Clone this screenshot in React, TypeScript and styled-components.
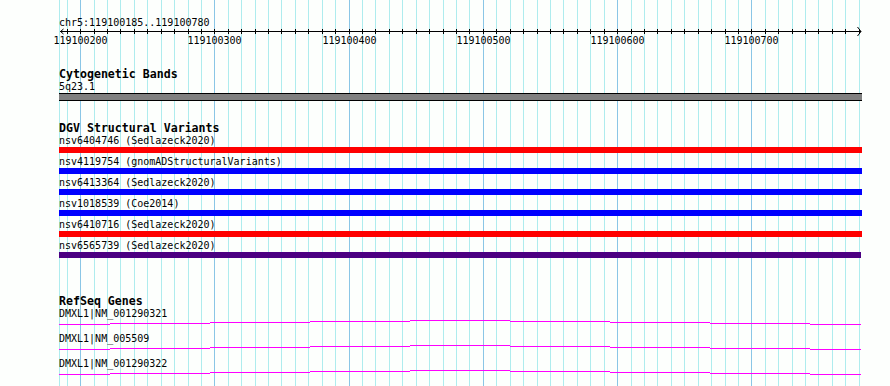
import React from "react";
import styled, { createGlobalStyle } from "styled-components";

const GlobalStyle = createGlobalStyle`
  html, body { margin: 0; padding: 0; background: #fdfffd; }
  body { font-family: "DejaVu Sans Mono", "Liberation Mono", monospace; color: #000; }
`;

const PX_PER_BP = 1.3425;
const X200 = 80.6;
const bpToX = (bp: number) => Math.floor(X200 + (bp - 200) * PX_PER_BP);

const gridBps: number[] = [];
for (let bp = 190; bp <= 780; bp += 10) gridBps.push(bp);
const majorBps = [200, 300, 400, 500, 600, 700];

const Page = styled.div`
  position: relative;
  width: 890px;
  height: 386px;
  overflow: hidden;
  background: #fdfffd;
`;

const GridLayer = styled.svg`
  position: absolute;
  left: 0;
  top: 0;
  width: 890px;
  height: 386px;
  z-index: 0;
`;

const Content = styled.div`
  position: relative;
  z-index: 1;
  display: flex;
  flex-direction: column;
`;

const LocationLabel = styled.div`
  margin: 17px 0 0 59px;
  height: 12px;
  font-size: 10px;
  line-height: 11px;
  padding-bottom: 1px;
  box-sizing: border-box;
  white-space: nowrap;
`;

const Axis = styled.svg`
  display: block;
  width: 890px;
  height: 21px;
  overflow: visible;
`;

const AxisLabel = styled.text`
  font-family: "DejaVu Sans Mono", "Liberation Mono", monospace;
  font-size: 10px;
  fill: #000;
`;

const Track = styled.section<{ $gap: number }>`
  margin-top: ${(p) => p.$gap}px;
  padding-left: 59px;
  display: flex;
  flex-direction: column;
`;

const TrackTitle = styled.div`
  font-weight: bold;
  font-size: 11.6px;
  line-height: 13px;
  height: 14px;
  white-space: nowrap;
`;

const FeatureLabel = styled.div`
  font-size: 10px;
  line-height: 10px;
  height: 11px;
  white-space: nowrap;
`;

const Band = styled.div`
  width: 803px;
  height: 6px;
  background: #808080;
  border-top: 1px solid #000;
  border-bottom: 1px solid #000;
`;

const VariantRow = styled.div`
  display: flex;
  flex-direction: column;
  margin-bottom: 4px;
`;

const VariantBar = styled.div<{ $color: string; $width: number }>`
  height: 6px;
  width: ${(p) => p.$width}px;
  background: ${(p) => p.$color};
`;

const GeneRow = styled.div`
  display: flex;
  flex-direction: column;
`;

const GeneLine = styled.svg`
  display: block;
  width: 803px;
  height: 14px;
`;

const variants = [
  { id: "nsv6404746", src: "Sedlazeck2020", color: "#ff0000", width: 803 },
  { id: "nsv4119754", src: "gnomADStructuralVariants", color: "#0000ff", width: 803 },
  { id: "nsv6413364", src: "Sedlazeck2020", color: "#0000ff", width: 803 },
  { id: "nsv1018539", src: "Coe2014", color: "#0000ff", width: 803 },
  { id: "nsv6410716", src: "Sedlazeck2020", color: "#ff0000", width: 803 },
  { id: "nsv6565739", src: "Sedlazeck2020", color: "#4b0082", width: 802 },
];

const genes = ["DMXL1|NM_001290321", "DMXL1|NM_005509", "DMXL1|NM_001290322"];

const segBounds = [0, 51, 151, 251, 351, 451, 551, 651, 751, 802];
const segOffsets = [4, 3, 2, 1, 0, 1, 2, 3, 4];

function GeneGlyph() {
  return (
    <GeneLine viewBox="0 0 803 14">
      {segOffsets.map((off, i) => (
        <line
          key={i}
          x1={segBounds[i]}
          x2={segBounds[i + 1]}
          y1={off + 0.5}
          y2={off + 0.5}
          stroke="#ff00ff"
          strokeWidth={1.2}
        />
      ))}
    </GeneLine>
  );
}

export default function App() {
  return (
    <>
      <GlobalStyle />
      <Page>
        <GridLayer viewBox="0 0 890 386">
          <line x1={59.5} x2={59.5} y1={0} y2={386} stroke="#aeecee" strokeWidth={1} />
          {gridBps.map((bp) => {
            const x = bpToX(bp) + 0.5;
            const major = bp % 100 === 0;
            return (
              <line
                key={bp}
                x1={x}
                x2={x}
                y1={0}
                y2={386}
                stroke={major ? "#8ac6e6" : "#aeecee"}
                strokeWidth={1}
              />
            );
          })}
        </GridLayer>
        <Content>
          <LocationLabel>chr5:119100185..119100780</LocationLabel>
          <Axis viewBox="0 0 890 21">
            <line x1={60} x2={861} y1={2.5} y2={2.5} stroke="#000" strokeWidth={1} />
            <polyline points="63.5,0 60.5,2.5 63.5,5" fill="none" stroke="#000" strokeWidth={1} />
            <polyline points="857.5,-2 861,2.5 857.5,7" fill="none" stroke="#000" strokeWidth={1} />
            {gridBps.map((bp) => {
              const x = bpToX(bp) + 0.5;
              return <line key={bp} x1={x} x2={x} y1={0} y2={5} stroke="#000" strokeWidth={1} />;
            })}
            {majorBps.map((bp) => (
              <AxisLabel key={bp} x={bpToX(bp) + 0.5} y={15} textAnchor="middle">
                {`119100${bp}`}
              </AxisLabel>
            ))}
          </Axis>

          <Track $gap={18}>
            <TrackTitle>Cytogenetic Bands</TrackTitle>
            <FeatureLabel>5q23.1</FeatureLabel>
            <Band />
          </Track>

          <Track $gap={21}>
            <TrackTitle>DGV Structural Variants</TrackTitle>
            {variants.map((v) => (
              <VariantRow key={v.id}>
                <FeatureLabel>{`${v.id} (${v.src})`}</FeatureLabel>
                <VariantBar $color={v.color} $width={v.width} />
              </VariantRow>
            ))}
          </Track>

          <Track $gap={33}>
            <TrackTitle>RefSeq Genes</TrackTitle>
            {genes.map((g) => (
              <GeneRow key={g}>
                <FeatureLabel>{g}</FeatureLabel>
                <GeneGlyph />
              </GeneRow>
            ))}
          </Track>
        </Content>
      </Page>
    </>
  );
}
